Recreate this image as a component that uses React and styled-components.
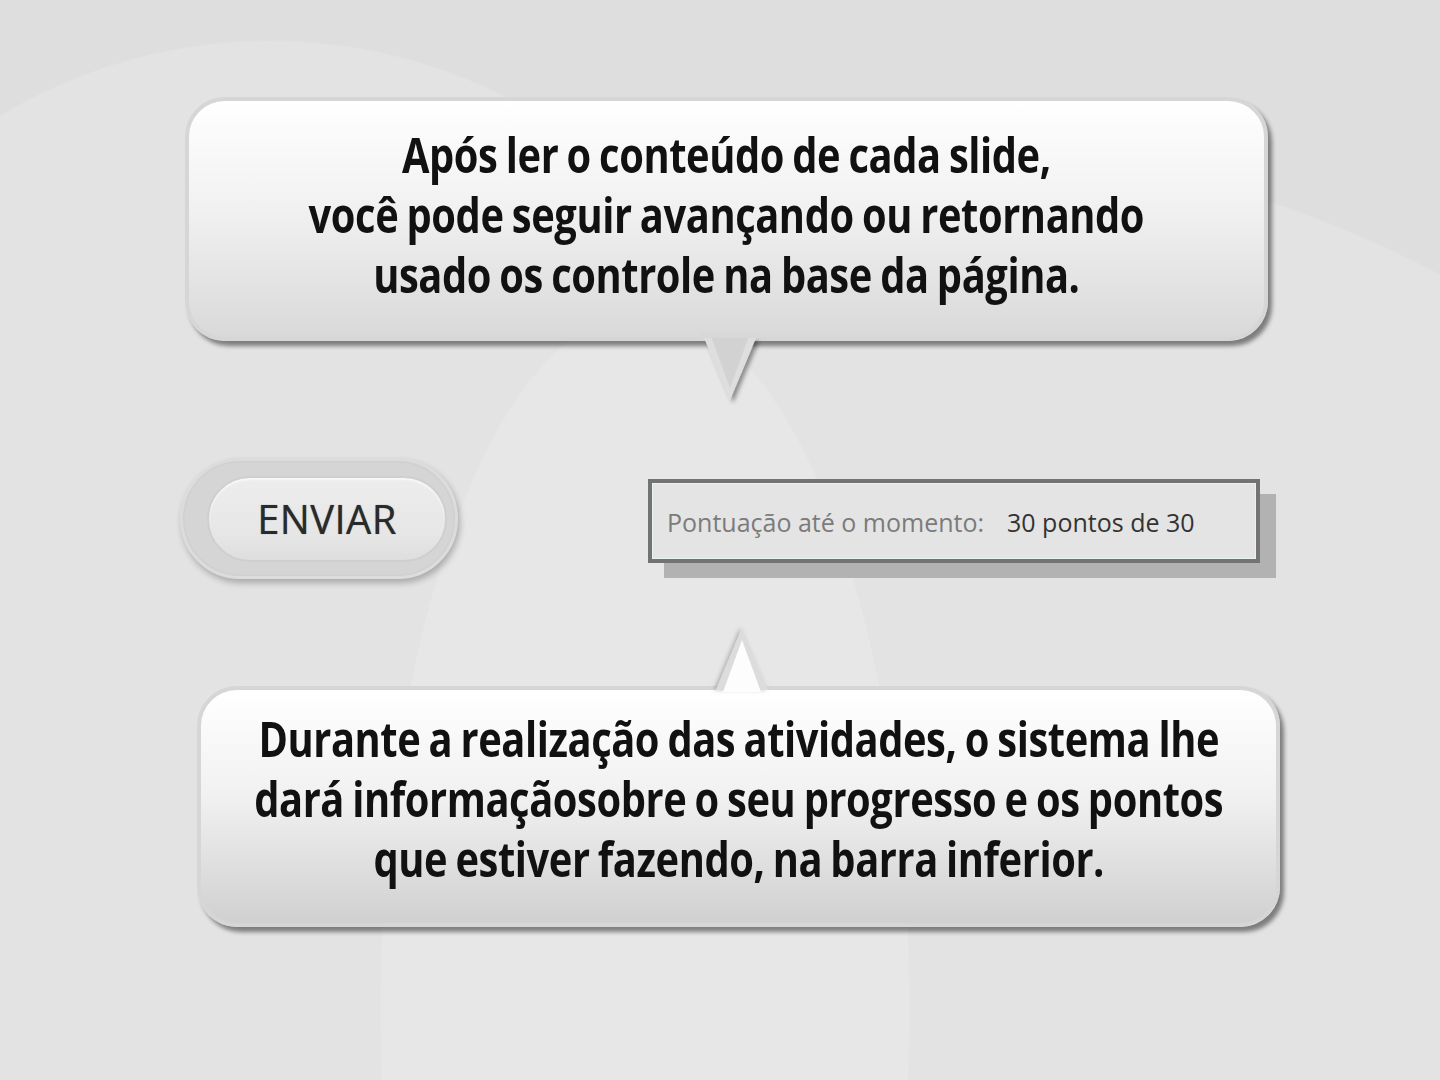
import styled, { createGlobalStyle } from "styled-components";

const GlobalStyle = createGlobalStyle`
  html, body {
    margin: 0;
    padding: 0;
  }
  body {
    width: 1440px;
    height: 1080px;
    overflow: hidden;
    background-color: #dedede;
    background-image:
      radial-gradient(ellipse 265px 700px at 645px 1010px, #e7e7e7 99.6%, transparent 100%),
      radial-gradient(circle 523px at 270px 563px, #e3e3e3 99.7%, transparent 100%),
      radial-gradient(circle 1160px at 900px 1300px, #e3e3e3 99.8%, transparent 100%);
    font-family: "Open Sans", "DejaVu Sans", sans-serif;
  }
`;

const Page = styled.div`
  display: flex;
  flex-direction: column;
  padding-top: 97px;
`;

const Bubble = styled.div`
  position: relative;
  box-sizing: border-box;
  width: 1083px;
  height: ${(p) => p.h}px;
  margin-left: ${(p) => p.left}px;
  border-radius: 40px;
  border: 4px solid #d6d6d6;
  background: linear-gradient(180deg, #ffffff 0%, #f1f1f1 45%, ${(p) => p.bottom} 100%);
  box-shadow: 4px 5px 4px rgba(0, 0, 0, 0.45);
  display: flex;
  align-items: center;
  justify-content: center;
`;

/* Myriad-like proportions: normal-width Open Sans squeezed horizontally */
const BubbleText = styled.p`
  margin: 0;
  margin-top: ${(p) => p.shift}px;
  flex-shrink: 0;
  font-family: "Open Sans", sans-serif;
  font-weight: 700;
  font-size: 48px;
  line-height: 60px;
  letter-spacing: -0.5px;
  word-spacing: -2px;
  white-space: nowrap;
  transform: scaleX(0.83);
  color: #111;
  text-align: center;
`;

const Tail = styled.svg`
  position: absolute;
  left: ${(p) => p.x}px;
  top: ${(p) => p.y}px;
  overflow: visible;
`;

const Row = styled.div`
  display: flex;
  align-items: flex-start;
  margin-top: 117px;
  height: 228px;
`;

const ButtonOuter = styled.div`
  box-sizing: border-box;
  width: 278px;
  height: 121px;
  margin-left: 180px;
  border-radius: 60px;
  background: #d5d5d5;
  border: 3px solid #dcdcdc;
  box-shadow: 2px 4px 6px rgba(0, 0, 0, 0.25), inset 0 0 3px rgba(0, 0, 0, 0.08);
  display: flex;
  align-items: center;
  padding-left: 24px;
`;

const ButtonInner = styled.div`
  box-sizing: border-box;
  width: 240px;
  height: 86px;
  border-radius: 43px;
  background: linear-gradient(180deg, #ededed 0%, #e6e6e6 70%, #dedede 100%);
  border: 2px solid #cfcfcf;
  box-shadow: inset 0 2px 2px #f8f8f8;
  display: flex;
  align-items: center;
  justify-content: center;
  font-family: "Open Sans", sans-serif;
  font-size: 40px;
  color: #2a2a2a;
  letter-spacing: 0.4px;
  text-shadow: 0 0 1px rgba(0, 0, 0, 0.5);
`;

const Score = styled.div`
  box-sizing: border-box;
  width: 612px;
  height: 84px;
  margin-left: 190px;
  margin-top: 21px;
  border: 4px solid #737373;
  outline: 1px solid #e8f4f4;
  outline-offset: -5px;
  background: #e4e4e4;
  box-shadow: 16px 15px 0 #b2b2b2;
  display: flex;
  align-items: center;
  padding-left: 15px;
  padding-top: 1px;
  font-family: "Open Sans", sans-serif;
  font-size: 25px;
  gap: 23px;
`;

const Label = styled.span`
  color: ${(p) => p.color};
`;

export default function App() {
  return (
    <>
      <GlobalStyle />
      <Page>
        <Bubble left={185} h={244} bottom="#d9d9d9">
          <BubbleText shift={-9}>
            Após ler o conteúdo de cada slide,
            <br />
            você pode seguir avançando ou retornando
            <br />
            usado os controle na base da página.
          </BubbleText>
          <Tail x={511} y={235} width="60" height="70">
            <defs>
              <filter id="ts1" x="-50%" y="-50%" width="200%" height="200%">
                <feDropShadow dx="3" dy="3" stdDeviation="2" floodColor="#000" floodOpacity="0.4" />
              </filter>
            </defs>
            <polygon points="4,2 56,2 30,64" fill="#dedede" filter="url(#ts1)" />
            <polygon points="11,0 49,0 30,52" fill="#d2d2d2" />
            <rect x="0" y="-3" width="60" height="5" fill="#d7d7d7" />
          </Tail>
        </Bubble>
        <Row>
          <ButtonOuter>
            <ButtonInner>ENVIAR</ButtonInner>
          </ButtonOuter>
          <Score>
            <Label color="#7b7b7b">Pontuação até o momento:</Label>
            <Label color="#333">30 pontos de 30</Label>
          </Score>
        </Row>
        <Bubble left={197} h={241} bottom="#d0d0d0">
          <BubbleText shift={-15}>
            Durante a realização das atividades, o sistema lhe
            <br />
            dará informaçãosobre o seu progresso e os pontos
            <br />
            que estiver fazendo, na barra inferior.
          </BubbleText>
          <Tail x={512} y={-62} width="60" height="70">
            <defs>
              <filter id="ts2" x="-50%" y="-50%" width="200%" height="200%">
                <feDropShadow dx="-2" dy="0" stdDeviation="2" floodColor="#000" floodOpacity="0.25" />
              </filter>
            </defs>
            <polygon points="29,0 55,62 3,62" fill="#dcdcdc" filter="url(#ts2)" />
            <polygon points="29,12 48,64 10,64" fill="#fdfdfd" />
          </Tail>
        </Bubble>
      </Page>
    </>
  );
}
